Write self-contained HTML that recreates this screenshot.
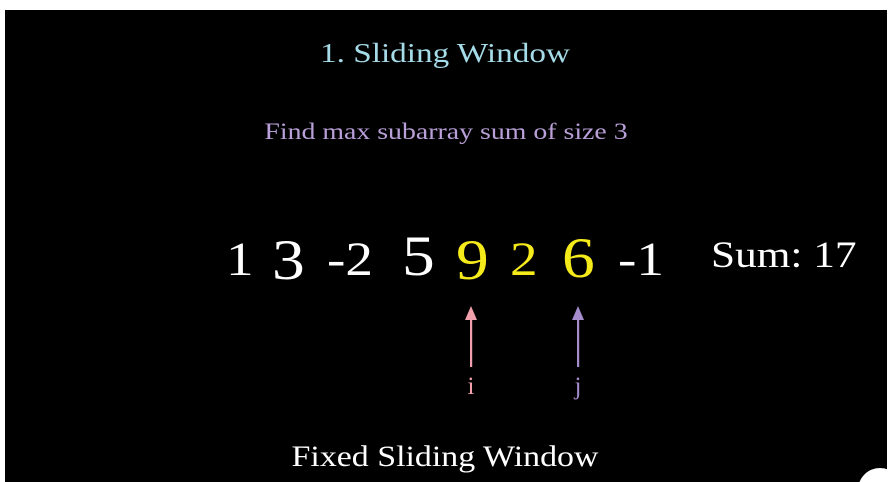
<!DOCTYPE html>
<html><head><meta charset="utf-8"><style>
html,body{margin:0;padding:0;background:#fff;width:890px;height:482px;overflow:hidden;position:relative;font-family:"Liberation Serif",serif}
#bg{position:absolute;left:5px;top:10px;width:882px;height:472px;background:#000}
.t{position:absolute;white-space:nowrap;line-height:1}
.d{position:absolute;top:228px;font-size:57px;line-height:1;color:#fff;transform:scaleX(1.15);transform-origin:left}
.s{font-size:48px;top:236px}
.y{color:#f5ea1a}
</style></head><body>
<div id="bg"></div>
<div class="t" style="left:445px;top:40px;font-size:27px;color:#a6dbe8;transform:translateX(-50%) scaleX(1.23)">1. Sliding Window</div>
<div class="t" style="left:446px;top:120px;font-size:23px;color:#b9a0d8;transform:translateX(-50%) scaleX(1.21)">Find max subarray sum of size 3</div>
<div class="d s" style="left:226px">1</div>
<div class="d" style="left:272px;top:232px">3</div>
<div class="d s" style="left:327px">-2</div>
<div class="d" style="left:402px">5</div>
<div class="d y" style="left:456px;top:232px">9</div>
<div class="d y s" style="left:510px">2</div>
<div class="d y" style="left:562px;top:230px">6</div>
<div class="d s" style="left:618px">-1</div>
<div class="t" style="left:711px;top:237px;font-size:37px;color:#fff;transform:scaleX(1.17);transform-origin:left">Sum: 17</div>
<svg style="position:absolute;left:0;top:0" width="890" height="482">
<polygon points="471,306 465,320 477,320" fill="#f2a0ac"/>
<rect x="470" y="318" width="2.2" height="49" fill="#f2a0ac"/>
<polygon points="578,306 572,320 584,320" fill="#a68ccc"/>
<rect x="577" y="318" width="2.2" height="49" fill="#a68ccc"/>
<circle cx="880" cy="490" r="22" fill="#fff"/>
</svg>
<div class="t" style="left:471px;top:374px;font-size:25px;color:#f2a0ac;transform:translateX(-50%)">i</div>
<div class="t" style="left:578px;top:374px;font-size:25px;color:#a68ccc;transform:translateX(-50%)">j</div>
<div class="t" style="left:445px;top:442px;font-size:30px;color:#fff;transform:translateX(-50%) scaleX(1.13)">Fixed Sliding Window</div>
</body></html>
